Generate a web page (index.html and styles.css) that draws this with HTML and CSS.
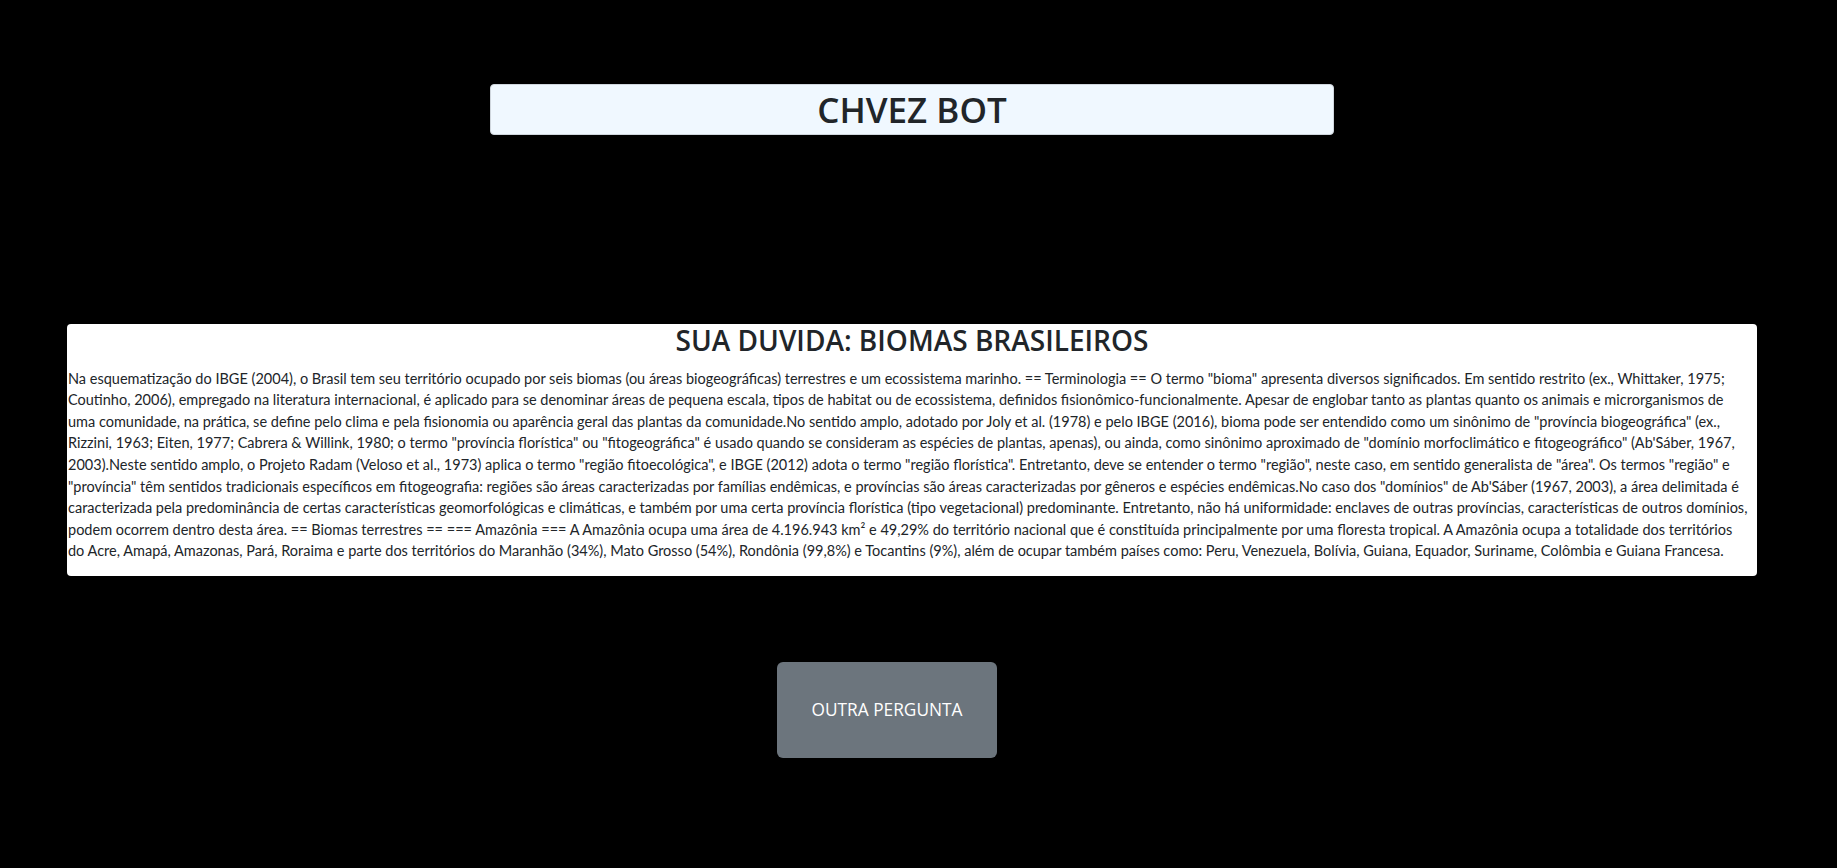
FILE: index.html
```html
<!DOCTYPE html>
<html lang="pt-BR">
<head>
<meta charset="utf-8">
<title>CHVEZ BOT</title>
<link rel="stylesheet" href="styles.css">
</head>
<body>
<main class="page">
  <header class="brand">
    <h1 class="brand-title">CHVEZ BOT</h1>
  </header>
  <section class="answer">
    <h3 class="answer-title">SUA DUVIDA: BIOMAS BRASILEIROS</h3>
    <p class="answer-text">Na esquematização do IBGE (2004), o Brasil tem seu território ocupado por seis biomas (ou áreas biogeográficas) terrestres e um ecossistema marinho. == Terminologia == O termo "bioma" apresenta diversos significados. Em sentido restrito (ex., Whittaker, 1975;<br>Coutinho, 2006), empregado na literatura internacional, é aplicado para se denominar áreas de pequena escala, tipos de habitat ou de ecossistema, definidos fisionômico-funcionalmente. Apesar de englobar tanto as plantas quanto os animais e microrganismos de<br>uma comunidade, na prática, se define pelo clima e pela fisionomia ou aparência geral das plantas da comunidade.No sentido amplo, adotado por Joly et al. (1978) e pelo IBGE (2016), bioma pode ser entendido como um sinônimo de "província biogeográfica" (ex.,<br>Rizzini, 1963; Eiten, 1977; Cabrera &amp; Willink, 1980; o termo "província florística" ou "fitogeográfica" é usado quando se consideram as espécies de plantas, apenas), ou ainda, como sinônimo aproximado de "domínio morfoclimático e fitogeográfico" (Ab'Sáber, 1967,<br>2003).Neste sentido amplo, o Projeto Radam (Veloso et al., 1973) aplica o termo "região fitoecológica", e IBGE (2012) adota o termo "região florística". Entretanto, deve se entender o termo "região", neste caso, em sentido generalista de "área". Os termos "região" e<br>"província" têm sentidos tradicionais específicos em fitogeografia: regiões são áreas caracterizadas por famílias endêmicas, e províncias são áreas caracterizadas por gêneros e espécies endêmicas.No caso dos "domínios" de Ab'Sáber (1967, 2003), a área delimitada é<br>caracterizada pela predominância de certas características geomorfológicas e climáticas, e também por uma certa província florística (tipo vegetacional) predominante. Entretanto, não há uniformidade: enclaves de outras províncias, características de outros domínios,<br>podem ocorrem dentro desta área. == Biomas terrestres == === Amazônia === A Amazônia ocupa uma área de 4.196.943 km² e 49,29% do território nacional que é constituída principalmente por uma floresta tropical. A Amazônia ocupa a totalidade dos territórios<br>do Acre, Amapá, Amazonas, Pará, Roraima e parte dos territórios do Maranhão (34%), Mato Grosso (54%), Rondônia (99,8%) e Tocantins (9%), além de ocupar também países como: Peru, Venezuela, Bolívia, Guiana, Equador, Suriname, Colômbia e Guiana Francesa.</p>
  </section>
  <div class="actions">
    <button class="btn-secondary" type="button">OUTRA PERGUNTA</button>
  </div>
</main>
</body>
</html>
```
FILE: styles.css
```css
* { box-sizing: border-box; }
html, body { margin: 0; padding: 0; }
body {
  background: #000;
  color: #212529;
  font-family: "Open Sans", "Noto Sans", sans-serif;
  font-size: 16px;
  line-height: 1.5;
}
.page {
  display: flex;
  flex-direction: column;
  align-items: center;
  padding: 84px 13px 0 0;
}
.brand {
  width: 844px;
  background: #f0f8ff;
  border: 1px solid #cfd6dd;
  border-radius: 4px;
  text-align: center;
}
.brand-title {
  margin: 0;
  font-size: 35px;
  font-weight: 600;
  line-height: 49px;
}
.answer {
  width: 1690px;
  margin-top: 189px;
  background: #fff;
  border-radius: 4px;
  padding: 0 0 14px;
}
.answer-title {
  margin: 0 0 10px;
  text-align: center;
  font-size: 28px;
  font-weight: 600;
  line-height: 1.2;
}
.answer-text {
  margin: 0;
  padding-left: 1px;
  font-family: Lato, "Open Sans", sans-serif;
  font-size: 14.5px;
  line-height: 21.6px;
  white-space: nowrap;
}
.actions {
  margin-top: 86px;
  margin-right: 50px;
}
.btn-secondary {
  width: 220px;
  height: 96px;
  background: #6c757d;
  color: #fff;
  border: 0;
  border-radius: 6px;
  font-family: inherit;
  font-size: 17.3px;
}
```
